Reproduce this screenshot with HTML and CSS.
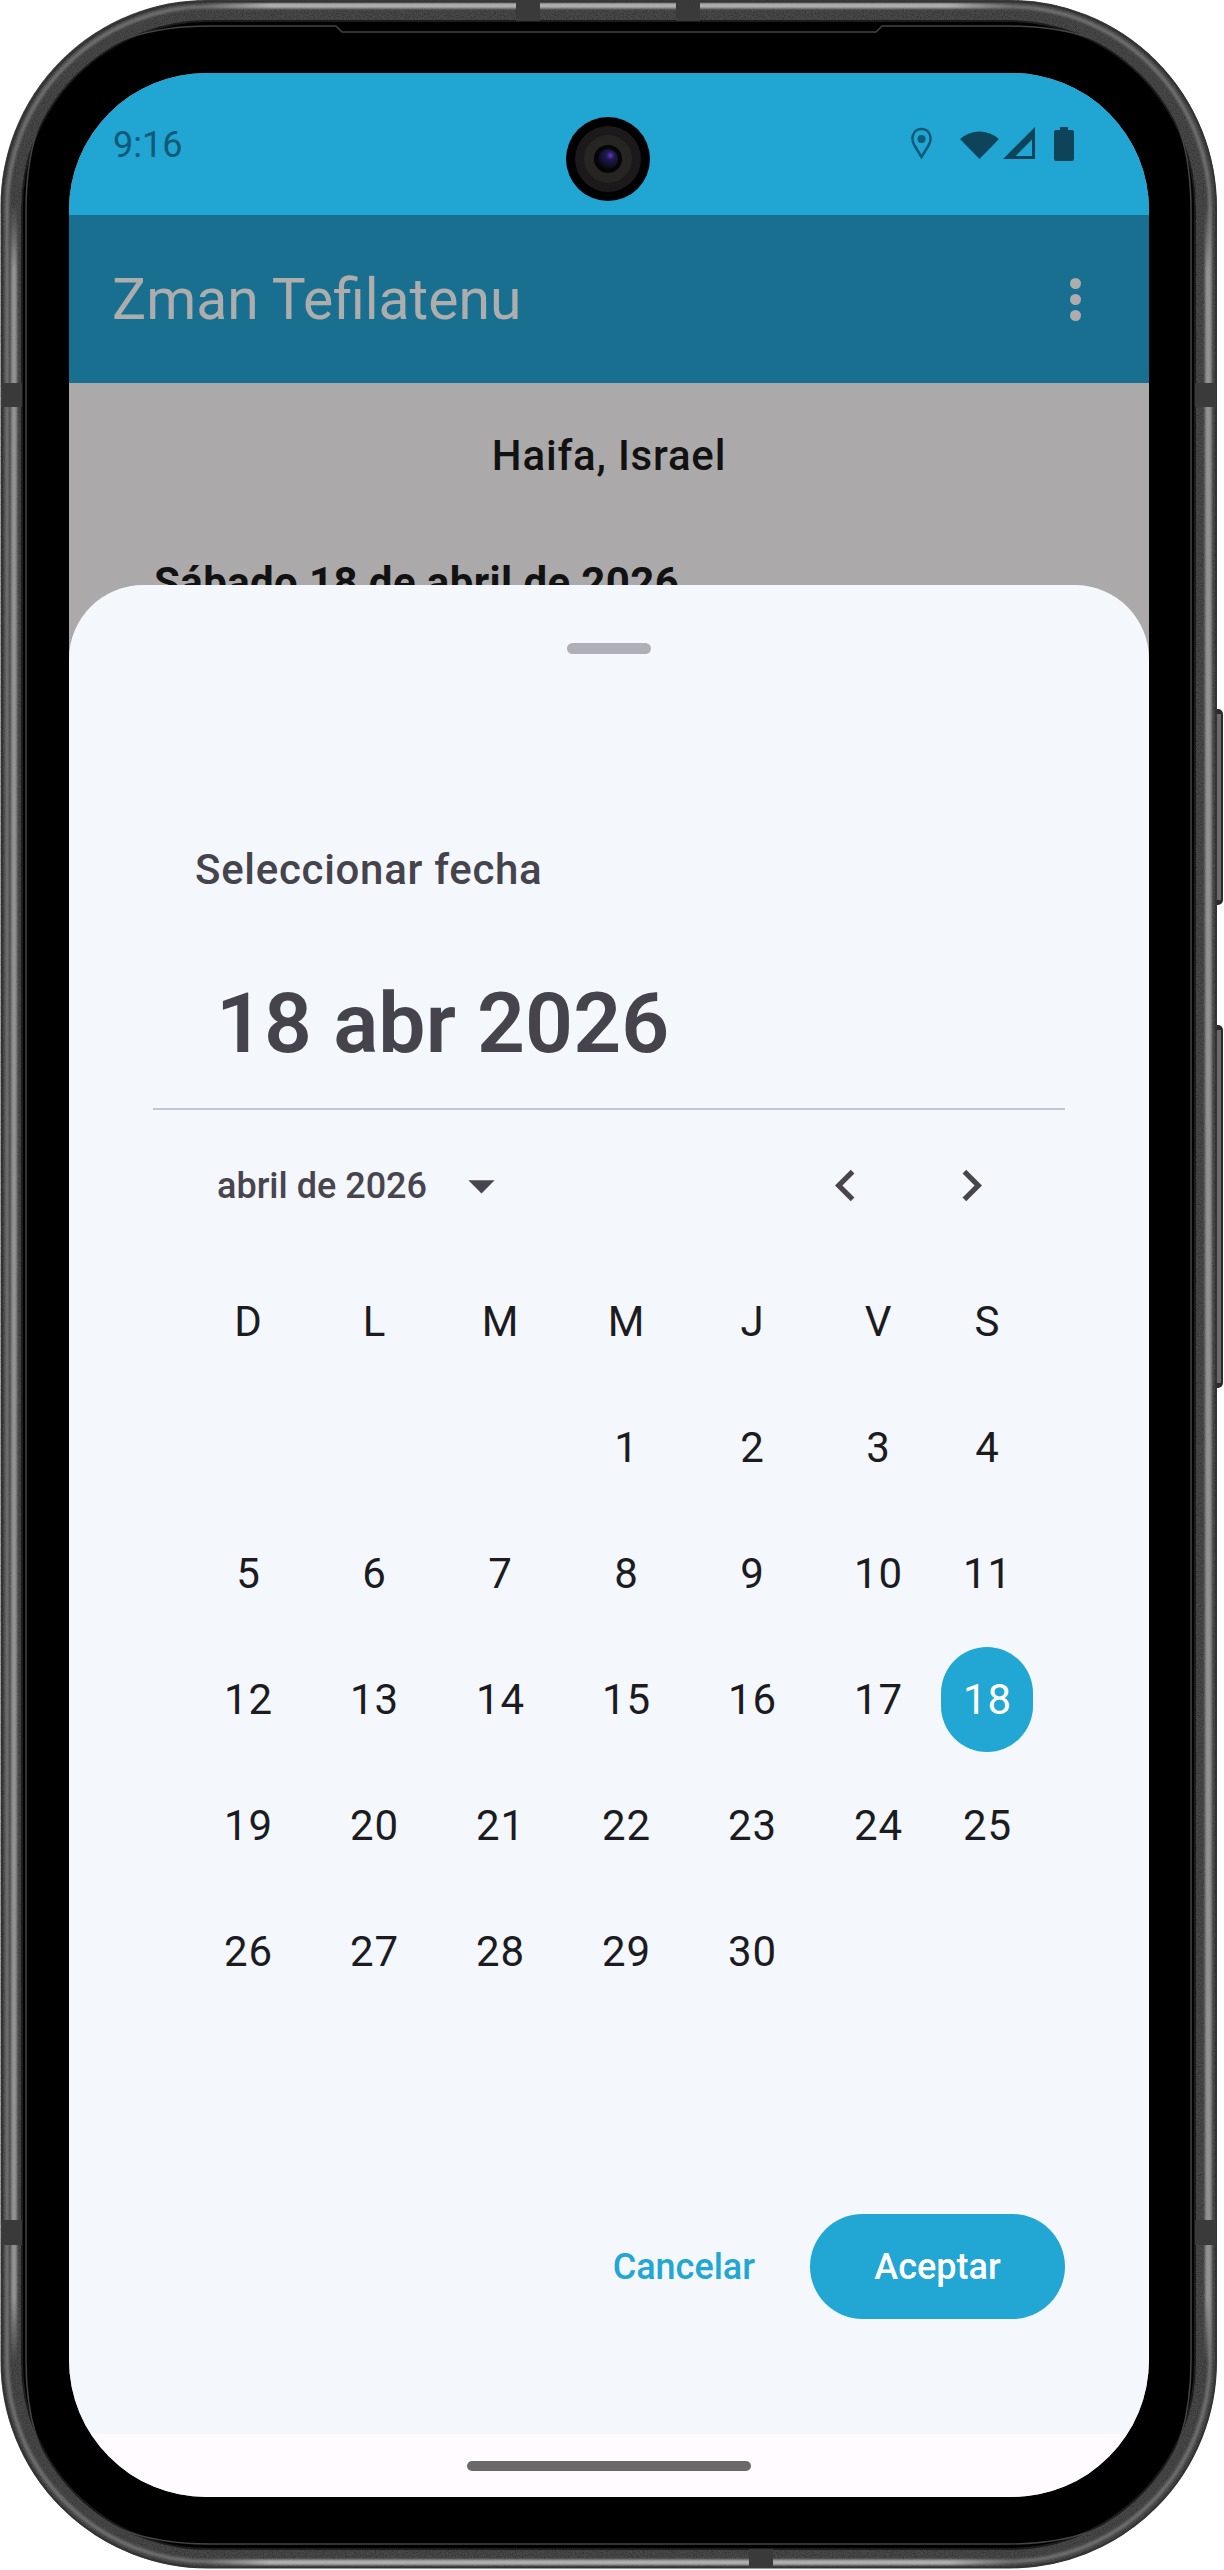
FILE: index.html
```html
<!DOCTYPE html>
<html lang="es">
<head>
<meta charset="utf-8">
<title>Zman Tefilatenu</title>
<link rel="stylesheet" href="styles.css">
</head>
<body>
<div class="device">
  <!-- Phone body: side keys, metal band, black glass -->
  <svg class="bezel" viewBox="0 0 1224 2570" aria-hidden="true">
    <defs>
      <filter id="grain" filterUnits="userSpaceOnUse" x="0" y="0" width="1224" height="2570">
        <feTurbulence type="fractalNoise" baseFrequency="0.9" numOctaves="2" seed="4" result="n"/>
        <feColorMatrix in="n" type="matrix" values="0 0 0 0 0  0 0 0 0 0  0 0 0 0 0  1.2 0 0 0 -0.45" result="speck"/>
        <feComposite in="speck" in2="SourceAlpha" operator="in" result="clipped"/>
        <feMerge><feMergeNode in="SourceGraphic"/><feMergeNode in="clipped"/></feMerge>
      </filter>
      <filter id="soft" filterUnits="userSpaceOnUse" x="0" y="0" width="1224" height="2570"><feGaussianBlur stdDeviation="1"/></filter>
      <linearGradient id="fade-h" x1="0" x2="1" y1="0" y2="0">
        <stop offset="0" stop-color="#b0b0b0" stop-opacity="0"/>
        <stop offset="0.08" stop-color="#b0b0b0"/>
        <stop offset="0.92" stop-color="#b0b0b0"/>
        <stop offset="1" stop-color="#b0b0b0" stop-opacity="0"/>
      </linearGradient>
      <linearGradient id="fade-v" x1="0" x2="0" y1="0" y2="1">
        <stop offset="0" stop-color="#929292" stop-opacity="0"/>
        <stop offset="0.03" stop-color="#929292"/>
        <stop offset="0.97" stop-color="#929292"/>
        <stop offset="1" stop-color="#929292" stop-opacity="0"/>
      </linearGradient>
    </defs>
    <rect class="key" x="1205" y="709" width="18" height="196" rx="5"/>
    <rect class="key" x="1205" y="1025" width="18" height="363" rx="5"/>
    <rect class="key-face" x="1216" y="714" width="5" height="186"/>
    <rect class="key-face" x="1216" y="1030" width="5" height="353"/>
    <g filter="url(#grain)">
      <rect class="band" x="11" y="10.500" width="1195" height="2547" rx="196"/>
    </g>
    <rect class="band-sheen" x="7" y="6.500" width="1203" height="2555" rx="201" filter="url(#soft)"/>
    <g filter="url(#soft)">
      <rect x="205" y="3" width="808" height="5" fill="url(#fade-h)"/>
      <rect x="205" y="2560" width="808" height="5" fill="url(#fade-h)"/>
      <rect x="11" y="205" width="6" height="2158" fill="url(#fade-v)"/>
      <rect x="1205" y="205" width="6" height="2158" fill="url(#fade-v)"/>
    </g>
    <rect class="band-edge" x="2" y="1.500" width="1214" height="2566" rx="206"/>
    <rect class="glass" x="22" y="21" width="1173" height="2528" rx="186"/>
    <path class="gasket" d="M336 26 L342 32 L876 32 L882 26 M336 26 H210 Q26 26 26 210 V2360 Q26 2544 210 2544 H1008 Q1191 2544 1191 2360 V210 Q1191 26 1008 26 H882"/>
    <rect class="seam" x="516" y="1" width="24" height="20"/>
    <rect class="seam" x="676" y="1" width="24" height="20"/>
    <rect class="seam" x="1" y="383" width="21" height="24"/>
    <rect class="seam" x="1195" y="383" width="21" height="24"/>
    <rect class="seam" x="1" y="2220" width="21" height="25"/>
    <rect class="seam" x="1195" y="2220" width="21" height="25"/>
    <rect class="seam" x="749" y="2549" width="24" height="19"/>
  </svg>

  <div class="screen">
    <header class="status-bar">
      <span class="clock">9:16</span>
      <svg class="icon-pin" viewBox="0 0 23 32"><path d="M11.500 30 L4.500 18.500 C0.500 12 2.500 2 11.500 2 C20.500 2 22.500 12 18.500 18.500 Z"/><circle cx="11.500" cy="12" r="4"/></svg>
      <svg class="icon-wifi" viewBox="0 0 39 32"><path d="M19.500 32 L0 12 A29 29 0 0 1 39 12 Z"/></svg>
      <svg class="icon-signal" viewBox="0 0 32 32"><path fill-rule="evenodd" d="M0 32 L32 0 V32 Z M12.500 29 H29 V12.500 Z"/></svg>
      <svg class="icon-battery" viewBox="0 0 20 34"><path d="M6 0 H14 V3 H18 Q20 3 20 5 V32 Q20 34 18 34 H2 Q0 34 0 32 V5 Q0 3 2 3 H6 Z"/></svg>
    </header>

    <!-- Front camera sits in the status bar -->
    <svg class="camera" viewBox="0 0 84 84" aria-hidden="true">
      <defs>
        <radialGradient id="lens" cx="62%" cy="32%" r="70%">
          <stop offset="0" stop-color="#6a35c0"/>
          <stop offset="0.3" stop-color="#1f1a52"/>
          <stop offset="1" stop-color="#08080f"/>
        </radialGradient>
      </defs>
      <circle cx="42" cy="42" r="42" fill="#000"/>
      <circle cx="42" cy="42" r="33" fill="#1b1919"/>
      <circle cx="42" cy="42" r="24" fill="#272424"/>
      <circle cx="42" cy="42" r="14" fill="#050505"/>
      <circle cx="42" cy="42" r="10" fill="url(#lens)"/>
    </svg>

    <nav class="toolbar">
      <h1 class="app-title">Zman Tefilatenu</h1>
      <div class="overflow-menu"><i></i><i></i><i></i></div>
    </nav>

    <main class="content">
      <p class="location">Haifa, Israel</p>
      <h2 class="date-heading">Sábado 18 de abril de 2026</h2>
    </main>

    <footer class="nav-bar"><span class="nav-handle"></span></footer>

    <section class="sheet">
      <div class="drag-handle"></div>
      <p class="picker-label">Seleccionar fecha</p>
      <p class="picker-date">18 abr 2026</p>
      <hr class="picker-rule">
      <div class="month-row">
        <span class="month-name">abril de 2026</span>
        <svg class="month-caret" viewBox="0 0 24 24"><path d="M7 10l5 5 5-5z"/></svg>
        <svg class="month-prev" viewBox="0 0 24 24"><path d="M15.410 7.410L14 6l-6 6 6 6 1.410-1.410L10.830 12z"/></svg>
        <svg class="month-next" viewBox="0 0 24 24"><path d="M10 6L8.590 7.410 13.170 12l-4.580 4.590L10 18l6-6z"/></svg>
      </div>
      <div class="calendar">
        <span>D</span><span>L</span><span>M</span><span>M</span><span>J</span><span>V</span><span>S</span>
        <span></span><span></span><span></span><span>1</span><span>2</span><span>3</span><span>4</span>
        <span>5</span><span>6</span><span>7</span><span>8</span><span>9</span><span>10</span><span>11</span>
        <span>12</span><span>13</span><span>14</span><span>15</span><span>16</span><span>17</span><span class="selected">18</span>
        <span>19</span><span>20</span><span>21</span><span>22</span><span>23</span><span>24</span><span>25</span>
        <span>26</span><span>27</span><span>28</span><span>29</span><span>30</span><span></span><span></span>
      </div>
      <div class="actions">
        <span class="btn-text">Cancelar</span>
        <span class="btn-filled">Aceptar</span>
      </div>
    </section>
  </div>
</div>
</body>
</html>
```
FILE: styles.css
```css
* { box-sizing: border-box; }

html, body {
  margin: 0;
  background: #fff;
}

body {
  font-family: Roboto, "Noto Sans", sans-serif;
}

.device {
  position: relative;
  width: 1224px;
  height: 2570px;
  padding: 73px 0 0 69px;
  overflow: hidden;
}

/* Phone body */
.bezel {
  position: absolute;
  left: 0;
  top: 0;
  width: 1224px;
  height: 2570px;
}
.key { fill: #2b2b2b; }
.key-face { fill: #6a6a6a; }
.band { fill: none; stroke: #4a4a4a; stroke-width: 21; }
.band-sheen { fill: none; stroke: #6e6e6e; stroke-width: 4; }
.band-edge { fill: none; stroke: #333; stroke-width: 2; }
.glass { fill: #000; stroke: #1c1c1c; stroke-width: 2; }
.gasket { fill: none; stroke: #444; stroke-width: 1.500; }
.seam { fill: #3a3a3a; }

/* Screen */
.screen {
  position: relative;
  display: flex;
  flex-direction: column;
  width: 1080px;
  height: 2424px;
  border-radius: 137px;
  overflow: hidden;
  background: #aba9aa;
}

.status-bar {
  display: flex;
  align-items: flex-start;
  flex: none;
  height: 142px;
  padding: 54px 75px 0 44px;
  background: #21a5d3;
}
.clock {
  margin-right: auto;
  margin-top: -4px;
  font-size: 36px;
  line-height: 44px;
  color: #0e5a77;
}
.icon-pin {
  width: 23px;
  height: 32px;
  fill: #0f5a76;
}
.icon-pin path { fill: none; stroke: #0f5a76; stroke-width: 2.500; }
.icon-wifi {
  width: 39px;
  height: 32px;
  margin-left: 27px;
  fill: #0e4459;
}
.icon-signal {
  width: 32px;
  height: 32px;
  margin-left: 4px;
  fill: #0e4459;
}
.icon-battery {
  width: 20px;
  height: 34px;
  margin-left: 19px;
  fill: #0e4459;
}

.camera {
  position: absolute;
  left: 497px;
  top: 44px;
  width: 84px;
  height: 84px;
}

.toolbar {
  display: flex;
  align-items: center;
  justify-content: space-between;
  flex: none;
  height: 168px;
  padding: 2px 68px 0 43px;
  background: #196f90;
}
.app-title {
  margin: 0;
  font-size: 57px;
  font-weight: 400;
  line-height: 68px;
  color: #adadad;
}
.overflow-menu {
  display: flex;
  flex-direction: column;
  gap: 5px;
  margin-top: -2px;
}
.overflow-menu i {
  width: 11px;
  height: 11px;
  border-radius: 50%;
  background: #adadad;
}

.content {
  flex: 1;
  padding: 48px 85px 0;
  color: #121213;
}
.location {
  margin: 0;
  font-size: 42px;
  font-weight: 500;
  line-height: 50px;
  letter-spacing: 0.8px;
  text-align: center;
}
.date-heading {
  margin: 77px 0 0;
  font-size: 42px;
  font-weight: 700;
  line-height: 50px;
  letter-spacing: 0.4px;
}

.nav-bar {
  display: flex;
  justify-content: center;
  flex: none;
  height: 63px;
  padding-top: 27px;
  background: #fffbff;
}
.nav-handle {
  width: 284px;
  height: 10px;
  border-radius: 5px;
  background: #6a6a6a;
}

/* Date picker sheet */
.sheet {
  position: absolute;
  left: 0;
  right: 0;
  top: 512px;
  bottom: 63px;
  padding: 58px 84px 0 84px;
  border-radius: 74px 74px 0 0;
  background: #f4f8fd;
}
.drag-handle {
  width: 84px;
  height: 11px;
  margin: 0 auto;
  border-radius: 6px;
  background: #aeafb7;
}
.picker-label {
  margin: 191px 0 0 42px;
  font-size: 42px;
  font-weight: 500;
  line-height: 50px;
  letter-spacing: 0.7px;
  color: #45444c;
}
.picker-date {
  margin: 79px 0 0 63px;
  font-size: 84px;
  font-weight: 600;
  line-height: 100px;
  letter-spacing: 0.1px;
  color: #45444c;
}
.picker-rule {
  height: 2px;
  margin: 34px 0 0;
  border: 0;
  background: #c5c5d0;
}
.month-row {
  display: flex;
  align-items: center;
  height: 63px;
  margin: 44px 0 0 64px;
  padding-right: 62px;
  fill: #49454f;
}
.month-name {
  font-size: 36px;
  font-weight: 500;
  color: #49454f;
}
.month-row svg {
  flex: none;
  width: 63px;
  height: 63px;
}
.month-caret { margin-left: 23px; }
.month-prev { margin-left: auto; }
.month-next { margin-left: 63px; }

.calendar {
  display: grid;
  grid-template-columns: repeat(6, 126px) 92px;
  grid-auto-rows: 126px;
  margin: 41px 0 0 32px;
  font-size: 42px;
  letter-spacing: 1px;
  color: #1c1b1f;
}
.calendar span {
  display: flex;
  align-items: center;
  justify-content: center;
  padding-left: 1px;
}
.calendar .selected {
  align-self: center;
  height: 105px;
  border-radius: 46px;
  background: #22a6d3;
  color: #fff;
}

.actions {
  display: flex;
  align-items: center;
  justify-content: flex-end;
  gap: 55px;
  margin-top: 200px;
  font-size: 36px;
  font-weight: 500;
}
.btn-text { color: #22a6d3; }
.btn-filled {
  display: flex;
  align-items: center;
  justify-content: center;
  width: 255px;
  height: 105px;
  border-radius: 53px;
  background: #22a6d3;
  color: #fff;
}
```
